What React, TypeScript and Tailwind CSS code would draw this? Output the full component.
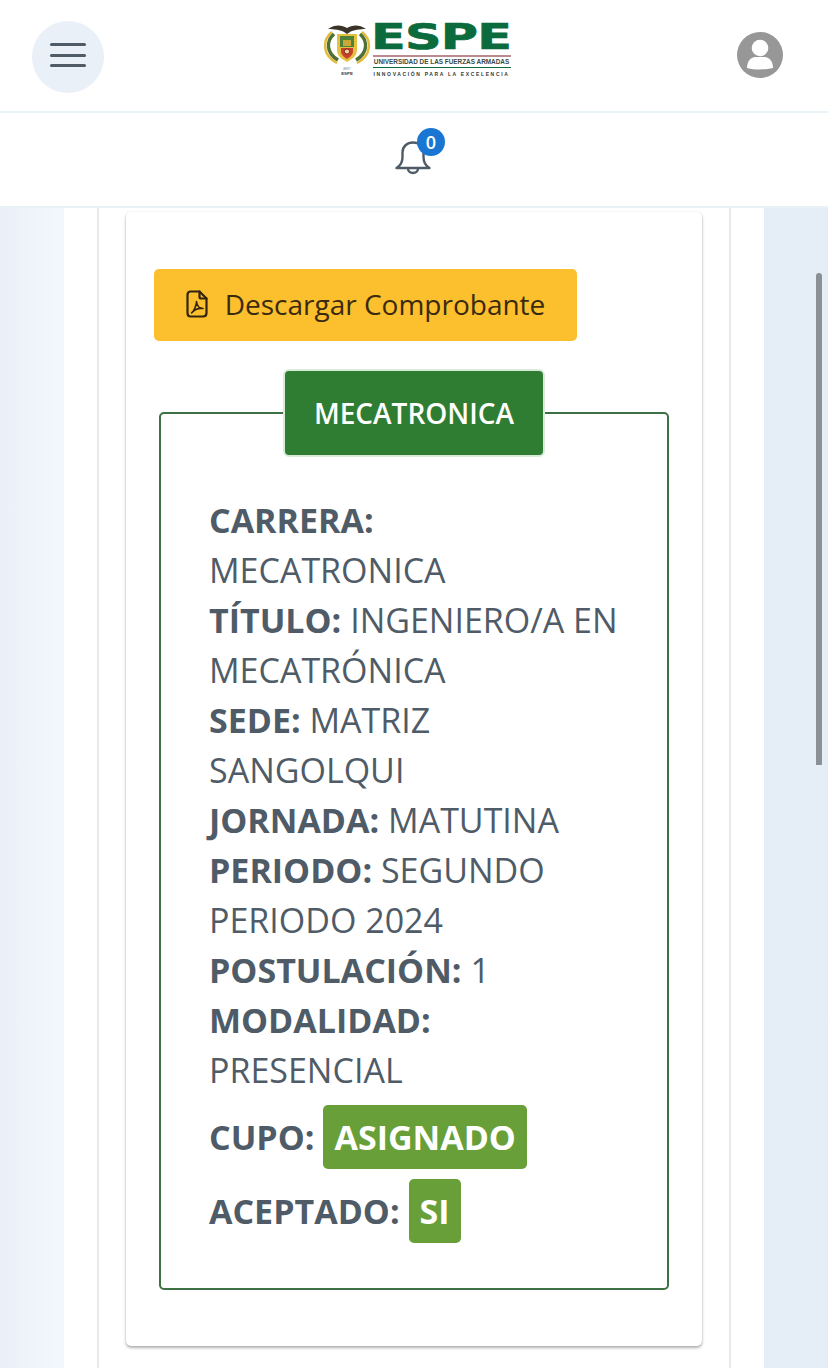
import React from 'react';

const Crest: React.FC = () => (
  <svg viewBox="0 0 48 56" className="w-[48px] h-[56px] shrink-0">
    {/* eagle */}
    <path d="M5 5 C12 0 19 1 24 4 C29 1 36 0 43 5 C37 5 30 6 27 8 L24 10 L21 8 C18 6 11 5 5 5 Z" fill="#3a3428" />
    {/* wreath */}
    <path d="M9 8 C-1 16 -1 31 14 39" fill="none" stroke="#e2bb3d" strokeWidth="2.4" />
    <path d="M39 8 C49 16 49 31 34 39" fill="none" stroke="#e2bb3d" strokeWidth="2.4" />
    <path d="M11 10 C3 17 3 29 15 36" fill="none" stroke="#4f6f33" strokeWidth="3.4" />
    <path d="M37 10 C45 17 45 29 33 36" fill="none" stroke="#4f6f33" strokeWidth="3.4" />
    {/* shield */}
    <path d="M14 10 H34 V26 C34 32 29 35 24 38 C19 35 14 32 14 26 Z" fill="#e4c23f" />
    <rect x="17" y="12" width="14" height="11" fill="#4f8138" />
    <rect x="20" y="16" width="8" height="6" fill="#c9a83a" />
    <path d="M18 24 H30 V27 C30 31 27 33 24 35 C21 33 18 31 18 27 Z" fill="#c8402c" />
    <circle cx="24" cy="27.5" r="2.6" fill="#efd9a0" stroke="#7c2418" strokeWidth="1" />
    <text x="24" y="46" textAnchor="middle" fontSize="2.6" fill="#8a8a8a" fontFamily="'Liberation Sans', sans-serif">ARMY</text>
    <text x="24" y="51" textAnchor="middle" fontSize="4.4" fontWeight="700" fill="#3a3a3a" fontFamily="'Liberation Sans', sans-serif">ESPE</text>
  </svg>
);

const Logo: React.FC = () => (
  <div className="flex items-start gap-[2px] mr-[8px] mb-[8px]">
    <Crest />
    <div className="w-[138px] flex flex-col">
      <div className="h-[29px] -ml-[2px] leading-[26px] text-[36px] font-bold text-[#0b6b3d] origin-left scale-x-[1.41] tracking-[-0.5px] [-webkit-text-stroke:0.7px_#0b6b3d] font-['DejaVu_Sans',sans-serif]">ESPE</div>
      <div className="h-[2px] bg-[#b98a8f] mt-[2px]" />
      <div className="h-[10px] leading-[10px] text-[6.4px] font-bold text-[#3d4a45] whitespace-nowrap font-['Liberation_Sans',sans-serif] text-center">UNIVERSIDAD DE LAS FUERZAS ARMADAS</div>
      <div className="h-[1px] bg-[#0b6b3d]" />
      <div className="mt-[2px] leading-[8px] text-[5px] font-bold text-[#333b38] whitespace-nowrap tracking-[1.65px] font-['Liberation_Sans',sans-serif] text-center">INNOVACIÓN PARA LA EXCELENCIA</div>
    </div>
  </div>
);

const Field: React.FC<{ label: string; value: string }> = ({ label, value }) => (
  <div>
    <strong className="font-bold">{label}:</strong> {value}
  </div>
);

const App: React.FC = () => {
  return (
    <div className="relative w-[828px] h-[1368px] overflow-hidden flex flex-col bg-white font-['Open_Sans',sans-serif] text-[#4f5b67]">
      <header className="h-[113px] shrink-0 flex items-center justify-between pl-[32px] pr-[45px] border-b-2 border-[#e9f2f6] bg-white">
        <button className="w-[72px] h-[72px] mt-[3px] pb-[4px] rounded-full bg-[#e9f0f8] flex flex-col items-center justify-center gap-[7.5px]">
          <span className="block w-[36px] h-[3px] rounded-full bg-[#4f5b67]" />
          <span className="block w-[36px] h-[3px] rounded-full bg-[#4f5b67]" />
          <span className="block w-[36px] h-[3px] rounded-full bg-[#4f5b67]" />
        </button>
        <Logo />
        <svg viewBox="0 0 46 46" className="w-[46px] h-[46px] mb-[1px]">
          <circle cx="23" cy="23" r="23" fill="#979797" />
          <circle cx="23" cy="16" r="8.3" fill="#fff" />
          <path d="M10 36 C10 29 14 25.5 18 25 H28 C32 25.5 36 29 36 36 C28 38 18 38 10 36 Z" fill="#fff" />
        </svg>
      </header>

      <div className="h-[95px] shrink-0 flex justify-center pt-[15px] border-b-2 border-[#e9f2f6] bg-white">
        <div className="relative w-[64px] h-[50px]">
          <svg viewBox="0 0 36 36" fill="none" stroke="#4f5b67" strokeWidth="2.4" strokeLinecap="round" strokeLinejoin="round" className="absolute left-[13px] top-[12px] w-[36px] h-[36px]">
            <path d="M1.5 28 C5 26 7.5 22 7.5 17 V12.5 C7.5 6.5 12 2.5 18 2.5 C24 2.5 28.5 6.5 28.5 12.5 V17 C28.5 22 31 26 34.5 28 Z" />
            <path d="M13 28.5 C13 34.5 23 34.5 23 28.5" />
          </svg>
          <span className="absolute left-[35px] top-0 w-[28px] h-[28px] rounded-full bg-[#1976d2] text-white text-[18px] font-semibold leading-[28px] text-center">0</span>
        </div>
      </div>

      <main className="flex-1 min-h-0 flex justify-center bg-linear-to-r from-[#ebf0f8] via-[#f2f6fd] via-[7%] to-[#e5edf6] to-[93%]">
        <div className="w-[700px] bg-white px-[33px]">
          <div className="h-full border-x-2 border-[#e6e8ea] px-[27px] pt-[4px]">
            <section className="h-[1134px] rounded-[5px] bg-white shadow-[0_2px_3px_rgba(0,0,0,0.3),0_0_2px_rgba(0,0,0,0.1)] pt-[57px] px-[28px]">
              <button className="w-[423px] h-[72px] pb-[2px] rounded-[5px] bg-[#fcbf2d] flex items-center justify-center gap-[17px] text-[28px] text-[#3a2a10]">
                <svg viewBox="0 0 22 28" fill="none" stroke="#33240e" strokeWidth="2.2" strokeLinecap="round" strokeLinejoin="round" className="w-[22px] h-[28px] shrink-0">
                  <path d="M4.5 1.5 H13.5 L20.5 8.5 V23 C20.5 25 19 26.5 17 26.5 H4.5 C2.5 26.5 1.5 25 1.5 23 V5 C1.5 3 2.5 1.5 4.5 1.5 Z" />
                  <path d="M13.5 1.5 V7 C13.5 8 14.5 8.5 15.5 8.5 H20.5" />
                  <path d="M5.5 23 C8 21 10.5 15.5 10.5 11.5 C11 15.5 13.5 18.5 17 18.5 C13.5 18 8.5 19.5 5.5 23 Z" strokeWidth="1.6" />
                </svg>
                <span>Descargar Comprobante</span>
              </button>

              <fieldset className="mt-[28px] mx-[5px] h-[921px] border-2 border-[#3d7042] rounded-[5px] pl-[48px]">
                <legend className="ml-[74px] h-[88px] w-[262px] px-0">
                  <div className="h-full border-2 border-[#d9ead9] rounded-[6px] bg-[#2e7d32] text-white text-[28px] font-semibold flex items-center justify-center">MECATRONICA</div>
                </legend>
                <div className="w-[409px] pt-[38px] text-[34px] leading-[50px]">
                  <Field label="CARRERA" value="MECATRONICA" />
                  <Field label="TÍTULO" value="INGENIERO/A EN MECATRÓNICA" />
                  <Field label="SEDE" value="MATRIZ SANGOLQUI" />
                  <Field label="JORNADA" value="MATUTINA" />
                  <Field label="PERIODO" value="SEGUNDO PERIODO 2024" />
                  <Field label="POSTULACIÓN" value="1" />
                  <Field label="MODALIDAD" value="PRESENCIAL" />
                  <div className="flex flex-col gap-[10px] mt-[10px] font-bold">
                    <div className="flex items-center gap-[9px]">
                      <span>CUPO:</span>
                      <span className="h-[64px] px-[11px] rounded-[5px] bg-[#689f38] text-white leading-[64px]">ASIGNADO</span>
                    </div>
                    <div className="flex items-center gap-[9px]">
                      <span>ACEPTADO:</span>
                      <span className="h-[64px] px-[11px] rounded-[5px] bg-[#689f38] text-white leading-[64px]">SI</span>
                    </div>
                  </div>
                </div>
              </fieldset>
            </section>
          </div>
        </div>
      </main>

      <div className="absolute left-[816px] top-[273px] w-[6px] h-[492px] rounded-t-[3px] bg-[#8a9095]" />
    </div>
  );
};

export default App;
